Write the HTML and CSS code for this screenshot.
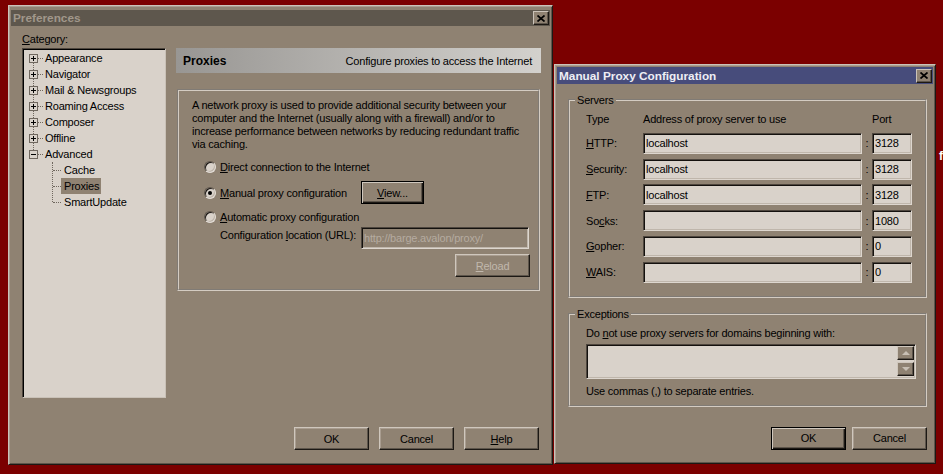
FILE: index.html
```html
<!DOCTYPE html>
<html lang="en">
<head>
    <meta charset="UTF-8">
    <meta name="viewport" content="width=device-width, initial-scale=1.0">
    <title>Preferences - Manual Proxy Configuration</title>
    <link rel="stylesheet" href="styles.css">
</head>
<body>
<div class="desktop">
    <span class="stray">f</span>

    <!-- Preferences dialog (inactive, behind) -->
    <div class="window prefs">
        <div class="titlebar inactive">
            <span>Preferences</span>
            <span class="close"><svg width="8" height="7" viewBox="0 0 8 7"><path d="M0.5 0.5L7.5 6.5M7.5 0.5L0.5 6.5"/></svg></span>
        </div>
        <div class="prefs-body">
            <div class="prefs-main">
                <div class="category">
                    <div class="cat-label"><u>C</u>ategory:</div>
                    <div class="tree">
                        <ul class="tree-root">
                            <li class="node"><span class="exp plus"></span><span class="dash"></span><span class="name">Appearance</span></li>
                            <li class="node"><span class="exp plus"></span><span class="dash"></span><span class="name">Navigator</span></li>
                            <li class="node"><span class="exp plus"></span><span class="dash"></span><span class="name">Mail &amp; Newsgroups</span></li>
                            <li class="node"><span class="exp plus"></span><span class="dash"></span><span class="name">Roaming Access</span></li>
                            <li class="node"><span class="exp plus"></span><span class="dash"></span><span class="name">Composer</span></li>
                            <li class="node"><span class="exp plus"></span><span class="dash"></span><span class="name">Offline</span></li>
                            <li class="node"><span class="exp"></span><span class="dash"></span><span class="name">Advanced</span></li>
                        </ul>
                        <ul class="tree-sub">
                            <li class="node"><span class="dash long"></span><span class="name">Cache</span></li>
                            <li class="node"><span class="dash long"></span><span class="name selected">Proxies</span></li>
                            <li class="node"><span class="dash long"></span><span class="name">SmartUpdate</span></li>
                        </ul>
                    </div>
                </div>

                <div class="pane">
                    <div class="pane-head">
                        <b>Proxies</b>
                        <span>Configure proxies to access the Internet</span>
                    </div>
                    <div class="group">
                        <p class="desc">A network proxy is used to provide additional security between your computer and the Internet (usually along with a firewall) and/or to increase performance between networks by reducing redundant traffic via caching.</p>
                        <div class="opt opt-direct">
                            <span class="radio"></span>
                            <span class="opt-label"><u>D</u>irect connection to the Internet</span>
                        </div>
                        <div class="opt opt-manual">
                            <span class="radio checked"></span>
                            <span class="opt-label"><u>M</u>anual proxy configuration</span>
                            <button class="btn default view-btn"><u>V</u>iew...</button>
                        </div>
                        <div class="opt opt-auto">
                            <span class="radio"></span>
                            <span class="opt-label"><u>A</u>utomatic proxy configuration</span>
                        </div>
                        <div class="url-row">
                            <span class="url-label">Configuration <u>l</u>ocation (URL):</span>
                            <input class="field url" disabled value="http://barge.avalon/proxy/">
                        </div>
                        <div class="reload-row">
                            <button class="btn" disabled><u>R</u>eload</button>
                        </div>
                    </div>
                </div>
            </div>
            <div class="dlg-buttons">
                <button class="btn">OK</button>
                <button class="btn">Cancel</button>
                <button class="btn"><u>H</u>elp</button>
            </div>
        </div>
    </div>

    <!-- Manual proxy dialog (active) -->
    <div class="window manual">
        <div class="titlebar active">
            <span>Manual Proxy Configuration</span>
            <span class="close"><svg width="8" height="7" viewBox="0 0 8 7"><path d="M0.5 0.5L7.5 6.5M7.5 0.5L0.5 6.5"/></svg></span>
        </div>
        <div class="manual-body">
            <fieldset class="box servers">
                <legend>Servers</legend>
                <div class="server-grid">
                    <span class="col-head">Type</span>
                    <span class="col-head">Address of proxy server to use</span>
                    <span class="col-head"></span>
                    <span class="col-head">Port</span>

                    <label><u>H</u>TTP:</label>
                    <input class="field" value="localhost">
                    <span class="colon">:</span>
                    <input class="field port" value="3128">

                    <label><u>S</u>ecurity:</label>
                    <input class="field" value="localhost">
                    <span class="colon">:</span>
                    <input class="field port" value="3128">

                    <label><u>F</u>TP:</label>
                    <input class="field" value="localhost">
                    <span class="colon">:</span>
                    <input class="field port" value="3128">

                    <label>So<u>c</u>ks:</label>
                    <input class="field" value="">
                    <span class="colon">:</span>
                    <input class="field port" value="1080">

                    <label><u>G</u>opher:</label>
                    <input class="field" value="">
                    <span class="colon">:</span>
                    <input class="field port" value="0">

                    <label><u>W</u>AIS:</label>
                    <input class="field" value="">
                    <span class="colon">:</span>
                    <input class="field port" value="0">
                </div>
            </fieldset>

            <fieldset class="box exceptions">
                <legend>Exceptions</legend>
                <div class="exc-inner">
                    <div>Do <u>n</u>ot use proxy servers for domains beginning with:</div>
                    <div class="textarea">
                        <div class="scrollbar">
                            <span class="sb-btn up"></span>
                            <span class="sb-btn down"></span>
                        </div>
                    </div>
                    <div class="hint">Use commas (,) to separate entries.</div>
                </div>
            </fieldset>

            <div class="dlg-buttons">
                <button class="btn default">OK</button>
                <button class="btn">Cancel</button>
            </div>
        </div>
    </div>
</div>
</body>
</html>
```

FILE: styles.css
```css
body {
    margin: 0;
    background-color: #7b0000;
    font-family: "Liberation Sans", Arial, sans-serif;
    font-size: 11px;
    letter-spacing: -0.2px;
    line-height: 14px;
    color: #000;
}
.desktop {
    position: relative;
    width: 943px;
    height: 474px;
    overflow: hidden;
}
.stray {
    position: absolute;
    left: 939px;
    top: 149px;
    color: #fff;
    font-weight: bold;
    font-size: 12px;
    letter-spacing: 0;
}

/* windows */
.window {
    position: absolute;
    box-sizing: border-box;
    display: flex;
    flex-direction: column;
    background-color: #8f8272;
    border: 1px solid;
    border-color: #cbc3b9 #1c1814 #1c1814 #cbc3b9;
    box-shadow: inset 1px 1px 0 #a99d90, inset -1px -1px 0 #5d554b;
}
.prefs {
    left: 8px;
    top: 5px;
    width: 545px;
    height: 460px;
    padding: 4px 2px 2px 2px;
}
.manual {
    left: 554px;
    top: 64px;
    width: 382px;
    height: 400px;
    padding: 2px;
}
.titlebar {
    display: flex;
    align-items: center;
    justify-content: space-between;
    height: 16px;
    padding: 0 1px 0 2px;
    font-weight: bold;
    font-size: 11.8px;
    letter-spacing: 0;
}
.titlebar.inactive {
    background-color: #5e574d;
    color: #a1978b;
}
.titlebar.active {
    height: 17px;
    background-color: #474c7b;
    color: #eeeef4;
}
.close {
    box-sizing: border-box;
    width: 16px;
    height: 14px;
    display: flex;
    align-items: center;
    justify-content: center;
    background-color: #8f8272;
    border: 1px solid;
    border-color: #cbc3b9 #1c1814 #1c1814 #cbc3b9;
    box-shadow: inset -1px -1px 0 #5d554b;
}
.close svg path {
    stroke: #000;
    stroke-width: 1.7;
    fill: none;
}

/* buttons */
.btn {
    box-sizing: border-box;
    width: 75px;
    height: 23px;
    padding: 0;
    margin: 0;
    background-color: #8f8272;
    border: 1px solid;
    border-color: #cfc7bd #1c1814 #1c1814 #cfc7bd;
    box-shadow: inset -1px -1px 0 #5d554b, inset 1px 1px 0 #a99d90;
    font: inherit;
    letter-spacing: inherit;
    color: #000;
}
.btn.default {
    border-color: #000;
    box-shadow: inset 1px 1px 0 #cfc7bd, inset -1px -1px 0 #1c1814, inset -2px -2px 0 #5d554b;
}
.btn:disabled {
    color: #c1b8ad;
}
.dlg-buttons {
    display: flex;
    justify-content: flex-end;
    gap: 10px;
}

/* preferences body */
.prefs-body {
    flex: 1;
    display: flex;
    flex-direction: column;
    padding: 6px 9px 0 11px;
}
.prefs-main {
    display: flex;
    gap: 10px;
}
.category {
    width: 144px;
}
.cat-label {
    height: 14px;
    margin-bottom: 2px;
}
.tree {
    box-sizing: border-box;
    height: 350px;
    padding: 1px 0 0 6px;
    background-color: #d9d2ca;
    border: 1px solid;
    border-color: #4e463e #c9c1b7 #c9c1b7 #4e463e;
    box-shadow: inset 1px 1px 0 #000;
}
.tree ul {
    list-style: none;
    margin: 0;
    padding: 0;
    position: relative;
}
.tree-root::before {
    content: "";
    position: absolute;
    left: 4px;
    top: 8px;
    height: 96px;
    border-left: 1px dotted #6f675e;
}
.tree-sub::before {
    content: "";
    position: absolute;
    left: 23px;
    top: 0;
    height: 40px;
    border-left: 1px dotted #6f675e;
}
.node {
    display: flex;
    align-items: center;
    height: 16px;
}
.tree-sub .node {
    padding-left: 24px;
}
.exp {
    position: relative;
    box-sizing: border-box;
    width: 9px;
    height: 9px;
    border: 1px solid #6f675e;
    background-color: #d9d2ca;
}
.exp::before {
    content: "";
    position: absolute;
    left: 1px;
    top: 3px;
    width: 5px;
    height: 1px;
    background-color: #000;
}
.exp.plus::after {
    content: "";
    position: absolute;
    left: 3px;
    top: 1px;
    width: 1px;
    height: 5px;
    background-color: #000;
}
.dash {
    width: 5px;
    margin-right: 2px;
    border-top: 1px dotted #6f675e;
}
.dash.long {
    width: 8px;
    margin-right: 0;
}
.name {
    line-height: 16px;
    padding: 0 2px 0 3px;
    white-space: nowrap;
}
.tree-root .name {
    padding: 0;
}
.name.selected {
    background-color: #8f8272;
}

/* right pane */
.pane {
    width: 365px;
    margin-top: 16px;
}
.pane-head {
    height: 25px;
    display: flex;
    align-items: center;
    justify-content: space-between;
    padding: 0 9px 0 7px;
    background: linear-gradient(to right, #989693, #d3d1cd);
}
.pane-head b {
    font-size: 12px;
    letter-spacing: 0;
}
.group {
    box-sizing: border-box;
    height: 202px;
    margin: 16px 1px 0;
    padding: 7.5px 8px 0 13px;
    border: 2px groove #d4ccc2;
}
.desc {
    margin: 0;
    line-height: 13px;
    padding-right: 2px;
}
.opt {
    display: flex;
    align-items: center;
    height: 20px;
    margin-left: 12px;
}
.opt-direct {
    margin-top: 6.5px;
}
.opt-manual {
    height: 23px;
    margin-top: 4px;
}
.opt-auto {
    margin-top: 3px;
}
.radio {
    position: relative;
    box-sizing: border-box;
    width: 12px;
    height: 12px;
    margin-right: 4px;
    border-radius: 50%;
    background-color: #d9d2ca;
    border: 1px solid;
    border-color: #5d554b #e2dcd5 #e2dcd5 #5d554b;
    box-shadow: inset 1px 1px 0 #1c1814, inset -1px -1px 0 #bdb4a9;
}
.radio.checked::after {
    content: "";
    position: absolute;
    left: 3px;
    top: 3px;
    width: 4px;
    height: 4px;
    border-radius: 50%;
    background-color: #000;
}
.opt-label {
    width: 141px;
    white-space: nowrap;
}
.view-btn {
    width: 63px;
}
.url-row {
    display: flex;
    align-items: flex-start;
    height: 22px;
    margin-left: 28px;
}
.url-label {
    width: 141px;
    padding-top: 1px;
    white-space: nowrap;
}
.field {
    box-sizing: border-box;
    height: 21px;
    margin: 0;
    padding: 0 2px;
    background-color: #d9d2ca;
    border: 1px solid;
    border-color: #4e463e #ddd6ce #ddd6ce #4e463e;
    box-shadow: inset 1px 1px 0 #14110e, inset -1px -1px 0 #bfb6ab;
    font: inherit;
    letter-spacing: inherit;
    color: #000;
    outline: none;
}
.field.url {
    width: 168px;
    height: 22px;
    background-color: #8f8272;
    color: #b5aba0;
}
.reload-row {
    display: flex;
    justify-content: flex-end;
    margin-top: 5px;
}
.prefs .dlg-buttons {
    margin: 29px 2px 0 0;
}

/* manual proxy body */
.manual-body {
    flex: 1;
    padding: 0 6px 0 11px;
}
.box {
    margin: 0;
    padding: 0;
    min-width: 0;
    border: 2px groove #d4ccc2;
}
.box legend {
    margin-left: 5px;
    padding: 0 2px;
    line-height: 14px;
}
.servers {
    margin-top: 9px;
}
.server-grid {
    display: grid;
    grid-template-columns: 57px 219px 10px 40px;
    grid-template-rows: 16px;
    grid-auto-rows: 21px;
    row-gap: 4.8px;
    align-items: center;
    padding: 5px 0 13px 16px;
}
.col-head {
    align-self: start;
    white-space: nowrap;
}
.colon {
    text-align: center;
}
.exceptions {
    margin-top: 9px;
}
.exc-inner {
    padding: 5px 9px 7px 16px;
}
.textarea {
    position: relative;
    box-sizing: border-box;
    display: flex;
    justify-content: flex-end;
    align-items: center;
    height: 35px;
    margin: 4px 0 5px;
    padding-right: 1px;
    background-color: #d9d2ca;
    border: 1px solid;
    border-color: #4e463e #ddd6ce #ddd6ce #4e463e;
    box-shadow: inset 1px 1px 0 #14110e, inset -1px -1px 0 #bfb6ab;
}
.scrollbar {
    display: flex;
    flex-direction: column;
    gap: 2px;
    width: 17px;
}
.sb-btn {
    position: relative;
    box-sizing: border-box;
    height: 14px;
    background-color: #8f8272;
    border: 1px solid;
    border-color: #cfc7bd #1c1814 #1c1814 #cfc7bd;
    box-shadow: inset -1px -1px 0 #5d554b;
}
.sb-btn::after {
    content: "";
    position: absolute;
    left: 4px;
    top: 4px;
    border-left: 4px solid transparent;
    border-right: 4px solid transparent;
}
.sb-btn.up::after {
    border-bottom: 4px solid #c8bfb4;
}
.sb-btn.down::after {
    border-top: 4px solid #c8bfb4;
}
.manual .dlg-buttons {
    gap: 6px;
    margin-top: 20px;
}
```
